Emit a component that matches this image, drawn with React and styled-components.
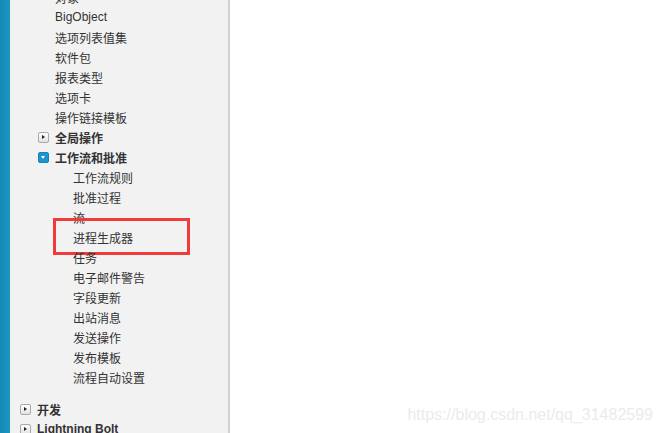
import React from "react";
import styled, { createGlobalStyle } from "styled-components";

const GlobalStyle = createGlobalStyle`
  html, body {
    margin: 0;
    padding: 0;
    overflow: hidden;
    background: #fff;
  }
`;

const Page = styled.div`
  display: flex;
  width: 665px;
  height: 433px;
  overflow: hidden;
  font-family: "Liberation Sans", "Noto Sans CJK SC", sans-serif;
`;

const Strip = styled.div`
  width: 10px;
  flex-shrink: 0;
  background: linear-gradient(to right, #1689b5, #1a97c4);
`;

const Sidebar = styled.nav`
  width: 218px;
  flex-shrink: 0;
  background: #f2f2f2;
  border-right: 2px solid #d2d2d2;
  box-shadow: 1px 0 0 #e4e4e4;
  overflow: hidden;
`;

const Tree = styled.ul`
  list-style: none;
  margin: -13px 0 0;
  padding: 0;
`;

const Row = styled.li`
  position: relative;
  display: flex;
  align-items: center;
  gap: 6px;
  height: 20px;
  padding-left: ${(p) => p.$indent}px;
  margin-top: ${(p) => (p.$spaced ? "12px" : "0")};
  font-size: 12px;
  color: #333;
  font-weight: ${(p) => (p.$bold ? "bold" : "normal")};
  white-space: nowrap;
`;

const Toggle = styled.span`
  position: relative;
  box-sizing: border-box;
  width: 11px;
  height: 11px;
  flex-shrink: 0;
  border-radius: 2px;
  border: 1px solid ${(p) => (p.$open ? "#1683bb" : "#a9a9a9")};
  background: ${(p) =>
    p.$open ? "#1f93cf" : "linear-gradient(#ffffff, #e2e2e2)"};

  &::after {
    content: "";
    position: absolute;
    width: 0;
    height: 0;
    ${(p) =>
      p.$open
        ? `left: 2px; top: 3px;
           border-left: 2.5px solid transparent;
           border-right: 2.5px solid transparent;
           border-top: 3.5px solid #fff;`
        : `left: 3px; top: 2px;
           border-top: 2.5px solid transparent;
           border-bottom: 2.5px solid transparent;
           border-left: 3.5px solid #222;`}
  }
`;

const Highlight = styled.span`
  position: absolute;
  left: 43px;
  top: -9px;
  width: 137px;
  height: 37px;
  box-sizing: border-box;
  border: 3px solid #f03b3b;
  pointer-events: none;
`;

const Main = styled.main`
  position: relative;
  flex: 1;
  background: #fff;
`;

const Watermark = styled.span`
  position: absolute;
  right: 12px;
  bottom: 9px;
  font-size: 16px;
  color: #ebebeb;
  font-family: "Liberation Sans", sans-serif;
`;

const objectItems = ["对象", "BigObject", "选项列表值集", "软件包", "报表类型", "选项卡", "操作链接模板"];

const workflowItems = [
  "工作流规则",
  "批准过程",
  "流",
  "进程生成器",
  "任务",
  "电子邮件警告",
  "字段更新",
  "出站消息",
  "发送操作",
  "发布模板",
  "流程自动设置",
];

export default function App() {
  return (
    <>
      <GlobalStyle />
      <Page>
        <Strip />
        <Sidebar>
          <Tree>
            {objectItems.map((item) => (
              <Row key={item} $indent={45}>
                {item}
              </Row>
            ))}
            <Row $indent={28} $bold>
              <Toggle />
              全局操作
            </Row>
            <Row $indent={28} $bold>
              <Toggle $open />
              工作流和批准
            </Row>
            {workflowItems.map((item) => (
              <Row key={item} $indent={63}>
                {item}
                {item === "进程生成器" && <Highlight />}
              </Row>
            ))}
            <Row $indent={10} $bold $spaced>
              <Toggle />
              开发
            </Row>
            <Row $indent={10} $bold>
              <Toggle />
              Lightning Bolt
            </Row>
          </Tree>
        </Sidebar>
        <Main>
          <Watermark>https://blog.csdn.net/qq_31482599</Watermark>
        </Main>
      </Page>
    </>
  );
}
